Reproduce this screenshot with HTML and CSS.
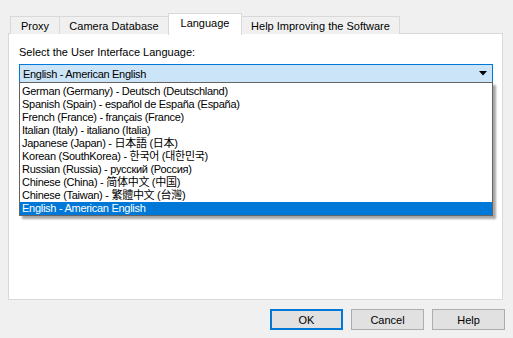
FILE: index.html
```html
<!DOCTYPE html>
<html>
<head>
<meta charset="utf-8">
<link rel="stylesheet" href="styles.css">
</head>
<body>
<div class="dialog">
  <div class="tabs">
    <div class="tab">Proxy</div>
    <div class="tab">Camera Database</div>
    <div class="tab active">Language</div>
    <div class="tab">Help Improving the Software</div>
  </div>
  <div class="panel">
    <div class="label">Select the User Interface Language:</div>
    <div class="combo-wrap">
      <div class="combo">
        <span>English - American English</span>
        <svg class="arrow" width="8" height="5" viewBox="0 0 8 5"><path d="M0 0H8L4 4.5Z" fill="#000"/></svg>
      </div>
      <div class="list">
        <div class="item">German (Germany) - Deutsch (Deutschland)</div>
        <div class="item">Spanish (Spain) - español de España (España)</div>
        <div class="item">French (France) - français (France)</div>
        <div class="item">Italian (Italy) - italiano (Italia)</div>
        <div class="item ja">Japanese (Japan) - 日本語 (日本)</div>
        <div class="item ko">Korean (SouthKorea) - 한국어 (대한민국)</div>
        <div class="item">Russian (Russia) - русский (Россия)</div>
        <div class="item sc">Chinese (China) - 简体中文 (中国)</div>
        <div class="item tc">Chinese (Taiwan) - 繁體中文 (台灣)</div>
        <div class="item sel">English - American English</div>
      </div>
    </div>
  </div>
  <div class="buttons">
    <button class="btn default">OK</button>
    <button class="btn">Cancel</button>
    <button class="btn">Help</button>
  </div>
</div>
</body>
</html>
```
FILE: styles.css
```css
html, body {
  margin: 0;
  padding: 0;
  background: #f0f0f0;
}
body {
  font-family: "Liberation Sans", "Noto Sans CJK JP", sans-serif;
  font-size: 11px;
  color: #000;
  width: 513px;
  height: 338px;
  overflow: hidden;
}
.dialog {
  padding: 13px 10px 0 8px;
}
.tabs {
  display: flex;
  align-items: flex-end;
  padding-left: 2px;
  height: 21px;
  position: relative;
  z-index: 1;
}
.tab {
  height: 17px;
  line-height: 18px;
  border: 1px solid #d9d9d9;
  border-bottom: none;
  background: #f0f0f0;
  box-sizing: content-box;
  text-align: center;
}
.tab:nth-child(1) { width: 48px; }
.tab:nth-child(2) { width: 108px; }
.tab:nth-child(3) { width: 72px; margin-left: -1px; }
.tab:nth-child(4) { width: 157px; }
.tab.active {
  height: 21px;
  line-height: 19px;
  background: #fff;
  position: relative;
  z-index: 2;
  margin-bottom: -1px;
}
.tab.active + .tab { border-left: none; }
.tab:nth-child(2) { border-left: none; }
.panel {
  background: #fff;
  border: 1px solid #d9d9d9;
  height: 267px;
  padding: 11px 10px 0 10px;
  box-sizing: border-box;
  margin-top: -1px;
}
.label {
  line-height: 15px;
  margin-bottom: 4px;
}
.combo-wrap {
  position: relative;
  width: 474px;
}
.combo {
  height: 17px;
  border: 1px solid #0078d7;
  background: #cce4f7;
  display: flex;
  align-items: center;
  justify-content: space-between;
  padding: 0 4px 0 3px;
  box-sizing: content-box;
  letter-spacing: -0.3px;
}
.arrow {
  margin-right: 1px;
}
.list {
  position: absolute;
  left: 0;
  top: 18px;
  width: 472px;
  background: #fff;
  border: 1px solid #646464;
  padding: 2px 0 0 0;
  box-shadow: 3px 3px 2px rgba(0,0,0,0.35);
}
.item {
  height: 13px;
  line-height: 13px;
  padding-left: 2px;
  white-space: nowrap;
  letter-spacing: -0.28px;
}
.item.ja { font-family: "Liberation Sans", "Noto Sans CJK JP", sans-serif; }
.item.ko { font-family: "Liberation Sans", "Noto Sans CJK KR", sans-serif; }
.item.sc { font-family: "Liberation Sans", "Noto Sans CJK SC", sans-serif; }
.item.tc { font-family: "Liberation Sans", "Noto Sans CJK TC", sans-serif; }
.item.sel {
  background: #0078d7;
  color: #fff;
}
.buttons {
  display: flex;
  justify-content: flex-end;
  gap: 8px;
  margin-top: 9px;
  margin-right: -2px;
}
.btn {
  width: 73px;
  height: 21px;
  background: #e1e1e1;
  border: 1px solid #adadad;
  font-family: "Liberation Sans", sans-serif;
  font-size: 11px;
  color: #000;
  padding: 0;
  margin: 0;
  box-sizing: border-box;
}
.btn.default {
  border: 2px solid #0078d7;
}
```
